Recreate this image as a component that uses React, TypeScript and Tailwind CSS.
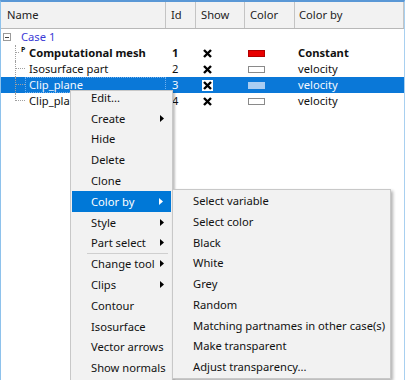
import React from "react";

type Row = {
  name: string;
  id: string;
  swatch: string;
  colorBy: string;
  bold?: boolean;
  selected?: boolean;
  prefix?: boolean;
  last?: boolean;
};

const rows: Row[] = [
  { name: "Computational mesh", id: "1", swatch: "red", colorBy: "Constant", bold: true, prefix: true },
  { name: "Isosurface part", id: "2", swatch: "white", colorBy: "velocity" },
  { name: "Clip_plane", id: "3", swatch: "sel", colorBy: "velocity", selected: true },
  { name: "Clip_plane", id: "4", swatch: "white", colorBy: "velocity", last: true },
];

const menuItems = [
  { label: "Edit..." },
  { label: "Create", sub: true },
  { label: "Hide" },
  { label: "Delete" },
  { label: "Clone" },
  { label: "Color by", sub: true, active: true },
  { label: "Style", sub: true },
  { label: "Part select", sub: true, sepAfter: true },
  { label: "Change tool", sub: true },
  { label: "Clips", sub: true },
  { label: "Contour" },
  { label: "Isosurface" },
  { label: "Vector arrows" },
  { label: "Show normals" },
];

const subItems = [
  "Select variable",
  "Select color",
  "Black",
  "White",
  "Grey",
  "Random",
  "Matching partnames in other case(s)",
  "Make transparent",
  "Adjust transparency...",
];

function XBox() {
  return (
    <svg width="11" height="11" viewBox="0 0 11 11" className="block">
      <rect width="11" height="11" fill="white" />
      <path d="M2 2 L9 9 M9 2 L2 9" stroke="black" strokeWidth="2.4" />
    </svg>
  );
}

function Swatch({ kind }: { kind: string }) {
  if (kind === "red")
    return <div className="w-[17px] h-[7px] bg-[#e80000] border border-[#b00000]" />;
  if (kind === "sel")
    return <div className="w-[17px] h-[7px] bg-[#a9cdf2] border border-[#a9cdf2]" />;
  return <div className="w-[17px] h-[7px] bg-white border border-[#8a8a8a]" />;
}

function Arrow({ light }: { light?: boolean }) {
  return (
    <svg width="4" height="7" viewBox="0 0 4 7" className="ml-auto mr-[8px] shrink-0">
      <path d="M0 0 L4 3.5 L0 7 Z" fill={light ? "white" : "black"} />
    </svg>
  );
}

export default function App() {
  return (
    <div className="relative w-[408px] h-[380px] overflow-hidden bg-white font-['Noto_Sans',sans-serif] text-[11.2px] text-[#111]">
      <div className="w-[405px] h-[380px] border-t-2 border-t-[#5a98d6] border-l border-l-[#8ec2ec] border-r border-r-[#a8d0f0]">
        {/* header */}
        <div className="flex h-[27px] bg-[#f2f2f2] border-b border-[#b8b8b8] text-[#222]">
          <div className="w-[165px] pl-[6px] flex items-center border-r border-[#c4c4c4]">Name</div>
          <div className="w-[30px] pl-[5px] flex items-center border-r border-[#c4c4c4]">Id</div>
          <div className="w-[49px] pl-[5px] flex items-center border-r border-[#c4c4c4]">Show</div>
          <div className="w-[50px] pl-[5px] flex items-center border-r border-[#c4c4c4]">Color</div>
          <div className="flex-1 pl-[4px] flex items-center border-r border-[#c4c4c4]">Color by</div>
        </div>

        {/* case row */}
        <div className="flex h-[16px] items-center pl-[2px] gap-[10px]">
          <div className="w-[8px] h-[8px] border border-[#9a9a9a] bg-white flex items-center justify-center">
            <div className="w-[4px] h-[1px] bg-[#444]" />
          </div>
          <span className="text-[#3a3ad6]">Case 1</span>
        </div>

        {/* part rows */}
        {rows.map((r, i) => (
          <div
            key={i}
            className={`flex h-[16px] items-center ${r.selected ? "bg-[#0a78d8] text-[#f4f8ff]" : ""} ${r.bold ? "font-bold" : ""}`}
          >
            <div className="w-[165px] h-full flex items-stretch pl-[14px]">
              <div className={`relative w-[10px] border-l border-dotted border-[#a0a0a0] ${r.last ? "h-[8px]" : ""}`}>
                <div className="mt-[7px] border-t border-dotted border-[#a0a0a0]" />
                {r.prefix && (
                  <span className="absolute left-[4px] top-[1px] text-[7px] font-bold bg-white px-[1px] leading-[7px]">P</span>
                )}
              </div>
              <div
                className={`flex-1 flex items-center pl-[3px] border border-dotted whitespace-nowrap ${r.selected ? "border-[#6fb0f0]" : "border-transparent"}`}
              >
                {r.name}
              </div>
            </div>
            <div className="w-[30px] pl-[6px]">{r.id}</div>
            <div className="w-[50px] pl-[6px]">
              <XBox />
            </div>
            <div className="w-[50px] pl-[2px]">
              <Swatch kind={r.swatch} />
            </div>
            <div className="flex-1 pl-[2px]">{r.colorBy}</div>
          </div>
        ))}
      </div>

      {/* context menu */}
      <div className="absolute left-[70px] top-[90px] w-[103px] h-[300px] bg-[#f2f2f2] border border-[#c8c8c8] shadow-[2px_2px_2px_rgba(0,0,0,0.25)] overflow-hidden">
        <div className="mt-[-4px] flex flex-col">
          {menuItems.map((m, i) => (
            <React.Fragment key={i}>
              <div
                className={`h-[20.8px] flex items-center whitespace-nowrap leading-none ${m.active ? "bg-[#0078d7] text-white mx-[1px] pl-[19px]" : "pl-[20px]"}`}
              >
                {m.label}
                {m.sub && <Arrow light={m.active} />}
              </div>
              {m.sepAfter && <div className="ml-[16px] mr-[4px] h-[1px] -my-[0.5px] bg-[#cfcfcf]" />}
            </React.Fragment>
          ))}
        </div>
      </div>

      {/* sub menu */}
      <div className="absolute left-[172px] top-[189px] w-[219px] h-[190px] bg-[#f2f2f2] border border-[#c8c8c8] shadow-[2px_2px_3px_rgba(0,0,0,0.3)] pt-[1px] flex flex-col">
        {subItems.map((s, i) => (
          <div key={i} className="h-[20.8px] pl-[20px] flex items-center whitespace-nowrap">
            {s}
          </div>
        ))}
      </div>
    </div>
  );
}
